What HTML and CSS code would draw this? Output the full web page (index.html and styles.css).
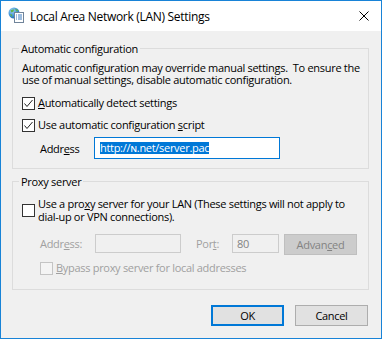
FILE: index.html
```html
<!doctype html>
<html lang="en">
  <head>
    <meta charset="UTF-8" />
    <title>Local Area Network (LAN) Settings</title>
    <link rel="stylesheet" href="styles.css">
  </head>
  <body>
    <div class="window">
      <div class="titleBar">
        <svg class="appIcon" viewBox="0 0 16 16">
          <defs>
            <radialGradient id="globe" cx="0.35" cy="0.3" r="0.8">
              <stop offset="0" stop-color="#9fd3f5" />
              <stop offset="0.6" stop-color="#3b8fd6" />
              <stop offset="1" stop-color="#1c5fa8" />
            </radialGradient>
          </defs>
          <circle cx="6" cy="6" r="5.5" fill="url(#globe)" />
          <path d="M2.5 3.5 Q4 2 6 2.5 L5.5 4.5 L3.5 5.5 Z M7 1.5 Q9.5 2 10.5 4 L8.5 4.5 Z M2 7 L4 7.5 L4.5 10 Q2.5 9 2 7 Z" fill="#5fb34a" />
          <rect x="6.5" y="5.5" width="9" height="10" fill="#fff" stroke="#70849a" />
          <path d="M8 8h1M10 8h4M8 10h1M10 10h4M8 12h1M10 12h4" stroke="#3a7bc0" />
        </svg>
        <span class="titleText">Local Area Network (LAN) Settings</span>
        <svg class="closeIcon" viewBox="0 0 10 10">
          <path d="M0.5 0.5 L9.5 9.5 M9.5 0.5 L0.5 9.5" stroke="#000" stroke-width="1" />
        </svg>
      </div>

      <div class="dialog">
        <fieldset class="group">
          <legend>Automatic configuration</legend>
          <p class="note">Automatic configuration may override manual settings.&nbsp; To ensure the<br>use of manual settings, disable automatic configuration.</p>

          <div class="checkRow">
            <span class="check"><svg viewBox="0 0 11 11"><polyline points="1.5,5.5 4,8.5 9.5,2" fill="none" stroke="#222" /></svg></span>
            <span class="checkLabel"><u>A</u>utomatically detect settings</span>
          </div>
          <div class="checkRow">
            <span class="check"><svg viewBox="0 0 11 11"><polyline points="1.5,5.5 4,8.5 9.5,2" fill="none" stroke="#222" /></svg></span>
            <span class="checkLabel">Use automatic configuration <u>s</u>cript</span>
          </div>

          <div class="fieldRow">
            <span class="fieldLabel">Addr<u>e</u>ss</span>
            <span class="textBox"><span class="selected">http://ɴ.net/server.pac</span></span>
          </div>
        </fieldset>

        <fieldset class="group proxy">
          <legend>Proxy server</legend>

          <div class="checkRow wrap">
            <span class="check"></span>
            <span class="checkLabel">Use a pro<u>x</u>y server for your LAN (These settings will not apply to<br>dial-up or VPN connections).</span>
          </div>

          <div class="fieldRow proxyRow">
            <span class="fieldLabel off">Addr<u>e</u>ss:</span>
            <span class="offBox addressBox"></span>
            <span class="fieldLabel off portLabel">Por<u>t</u>:</span>
            <span class="offBox portBox">80</span>
            <button class="button advanced" disabled>Advan<u>c</u>ed</button>
          </div>

          <div class="checkRow indent">
            <span class="check offCheck"></span>
            <span class="checkLabel off"><u>B</u>ypass proxy server for local addresses</span>
          </div>
        </fieldset>

        <div class="buttons">
          <button class="button default">OK</button>
          <button class="button">Cancel</button>
        </div>
      </div>
    </div>
  </body>
</html>
```

FILE: styles.css
```css
body {
  margin: 0;
  font-family: "Open Sans", "Noto Sans", sans-serif;
  font-size: 11px;
  letter-spacing: -0.3px;
  color: #000;
  background: #fff;
}

.window {
  width: 382px;
  height: 339px;
  box-sizing: border-box;
  border: 1px solid #1883d7;
  background: #f0f0f0;
  display: flex;
  flex-direction: column;
}

.titleBar {
  height: 30px;
  background: #fff;
  display: flex;
  align-items: center;
  padding: 0 12px 0 7px;
}
.appIcon {
  width: 16px;
  height: 16px;
  margin-top: -2px;
}
.titleText {
  flex: 1;
  margin-left: 6px;
  font-size: 12px;
}
.closeIcon {
  width: 10px;
  height: 10px;
  margin-top: -1px;
}

.dialog {
  flex: 1;
  display: flex;
  flex-direction: column;
  padding: 10px 12px 0 11px;
}

.group {
  margin: 0;
  min-width: 0;
  border: 1px solid #dcdcdc;
  padding: 0 9px 9px 9px;
}
.group legend {
  padding: 0 2px;
  margin-left: -3px;
  line-height: 15px;
}
.group.proxy {
  margin-top: 5px;
  padding-bottom: 14px;
}

.note {
  margin: 6px 0 0;
  line-height: 12px;
  white-space: nowrap;
}

.checkRow {
  display: flex;
  align-items: flex-start;
  margin-top: 11px;
  white-space: nowrap;
}
.checkRow + .checkRow {
  margin-top: 9px;
}
.check {
  flex: none;
  width: 13px;
  height: 13px;
  box-sizing: border-box;
  border: 1px solid #333;
  background: #fff;
  display: flex;
}
.check svg {
  width: 11px;
  height: 11px;
}
.checkLabel {
  margin-left: 3px;
  margin-top: -1px;
  line-height: 13px;
}
.checkRow.wrap {
  align-items: center;
  margin-top: 8px;
}
.checkRow.wrap .checkLabel {
  margin-top: 0;
}
.checkRow.indent {
  margin-top: 7px;
  padding-left: 18px;
}
.offCheck {
  border-color: #c4c4c4;
  background: #f4f4f4;
}
.off {
  color: #a0a0a0;
}

.fieldRow {
  display: flex;
  align-items: center;
  margin-top: 5px;
  padding-left: 18px;
}
.fieldLabel {
  width: 54px;
  line-height: 13px;
}
.textBox {
  width: 186px;
  height: 22px;
  box-sizing: border-box;
  border: 1px solid #0078d7;
  background: #fff;
  padding-left: 5px;
  display: flex;
  align-items: center;
}
.selected {
  background: #0078d7;
  color: #fff;
  line-height: 12px;
}

.proxyRow {
  align-items: flex-start;
  margin-top: 11px;
}
.proxyRow .fieldLabel {
  width: 55px;
  line-height: 19px;
}
.proxyRow .portLabel {
  width: 36px;
  margin-left: 15px;
}
.offBox {
  height: 19px;
  box-sizing: border-box;
  border: 1px solid #cccccc;
  background: #f0f0f0;
  color: #838383;
  line-height: 17px;
  padding-left: 4px;
}
.addressBox {
  width: 86px;
}
.portBox {
  width: 47px;
}

.button {
  width: 73px;
  height: 21px;
  box-sizing: border-box;
  padding: 0;
  border: 1px solid #adadad;
  background: #e1e1e1;
  color: #000;
  font: inherit;
  letter-spacing: inherit;
  display: flex;
  align-items: center;
  justify-content: center;
}
.button.default {
  border: 2px solid #0078d7;
}
.button.advanced {
  margin-left: 5px;
  border-color: #bfbfbf;
  background: #cccccc;
  color: #838383;
}

.buttons {
  display: flex;
  justify-content: flex-end;
  gap: 11px;
  margin-top: 15px;
  padding-right: 1px;
}
```
